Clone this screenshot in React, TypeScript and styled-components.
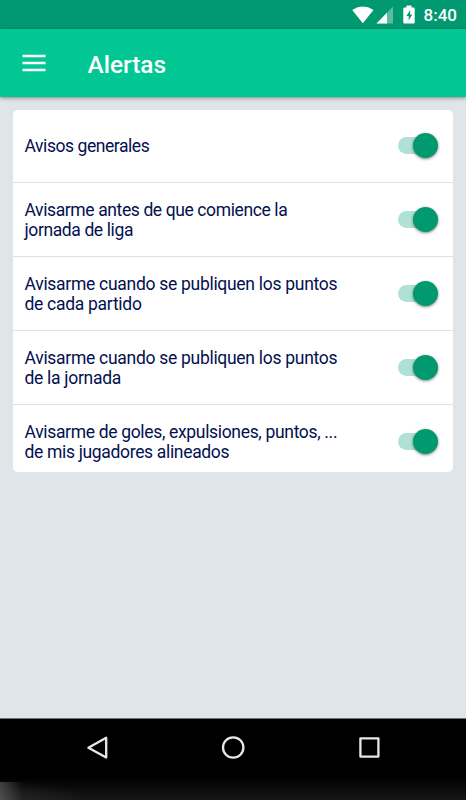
import React from "react";
import styled, { createGlobalStyle } from "styled-components";

const GlobalStyle = createGlobalStyle`
  *, *::before, *::after { box-sizing: border-box; }
  html, body { margin: 0; padding: 0; background: #e0e5e9; }
  body { font-family: Roboto, sans-serif; }
`;

const Screen = styled.div`
  display: flex;
  flex-direction: column;
  width: 100%;
  max-width: 466px;
  height: 800px;
  background: #e0e5e9;
  overflow: hidden;
`;

const StatusBar = styled.header`
  display: flex;
  align-items: center;
  justify-content: flex-end;
  flex: none;
  height: 29px;
  padding: 1px 9px 0 0;
  background: #019972;
  color: #fff;
`;

const StatusIcons = styled.svg`
  display: block;
  width: 66px;
  height: 22px;
  margin-right: 6px;
`;

const Clock = styled.time`
  font-size: 17px;
  font-weight: 500;
  line-height: 20px;
`;

const AppBar = styled.div`
  display: flex;
  align-items: center;
  flex: none;
  height: 68px;
  padding: 0 22px;
  background: #02c794;
  box-shadow: 0 1px 4px rgba(0, 0, 0, 0.42);
  z-index: 1;
`;

const MenuButton = styled.svg`
  width: 24px;
  height: 20px;
  margin: 0 41.5px 1px 0;
  stroke: #fff;
  stroke-width: 2.5;
`;

const Title = styled.h1`
  margin: 3px 0 0;
  color: #fff;
  font-size: 24.4px;
  font-weight: 500;
  line-height: 30px;
`;

const Content = styled.main`
  flex: 1;
  min-height: 0;
  padding: 13px;
`;

const Card = styled.ul`
  height: 362px;
  margin: 0;
  padding: 0;
  list-style: none;
  background: #fff;
  border-radius: 5px;
  overflow: hidden;
`;

const Row = styled.li`
  display: flex;
  align-items: center;
  justify-content: space-between;
  height: 74px;
  padding: 0 15px 0 11.5px;
  border-bottom: 1px solid #dce3e8;

  &:first-child { height: 73px; }
  &:last-child { border-bottom: 0; }
`;

const Label = styled.span<{ $tracking: number }>`
  color: #03104f;
  font-size: 17.5px;
  letter-spacing: ${(p) => p.$tracking}px;
  line-height: 20px;
  white-space: pre-line;
`;

const Toggle = styled.button<{ $on: boolean }>`
  display: flex;
  align-items: center;
  justify-content: ${(p) => (p.$on ? "flex-end" : "flex-start")};
  width: 34px;
  height: 17px;
  margin: 0 6px 1px 0;
  padding: 0;
  border: 0;
  border-radius: 9px;
  background: ${(p) => (p.$on ? "#b0e1d5" : "#bdc3c7")};
`;

const Thumb = styled.span`
  flex: none;
  width: 25px;
  height: 25px;
  margin-right: -6px;
  border-radius: 50%;
  background: #019970;
  box-shadow: 0 1px 3px rgba(0, 0, 0, 0.5);
`;

const NavBar = styled.nav`
  display: flex;
  justify-content: center;
  gap: 112px;
  flex: none;
  height: 82px;
  padding-top: 17px;
  border-top: 1px solid #737678;
  background:
    linear-gradient(90deg, rgba(110, 110, 110, 0.55), transparent 22px) 0 100% / 24px 18px no-repeat,
    radial-gradient(ellipse 90px 20px at 0 100%, rgba(60, 60, 60, 0.5) 0%, transparent 100%),
    linear-gradient(#000 0 58px, #060606 64px, #181616 82px);
`;

const NavIcon = styled.svg`
  width: 24px;
  height: 24px;
  fill: none;
  stroke: #e8e8e8;
  stroke-width: 2.3;
  stroke-linejoin: round;
`;

const alerts = [
  { text: "Avisos generales", tracking: -0.44 },
  { text: "Avisarme antes de que comience la\njornada de liga", tracking: -0.39 },
  { text: "Avisarme cuando se publiquen los puntos\nde cada partido", tracking: -0.29 },
  { text: "Avisarme cuando se publiquen los puntos\nde la jornada", tracking: -0.29 },
  { text: "Avisarme de goles, expulsiones, puntos, ...\nde mis jugadores alineados", tracking: -0.33 },
];

export default function App() {
  const [enabled, setEnabled] = React.useState(alerts.map(() => true));
  const toggle = (index: number) =>
    setEnabled((values) => values.map((value, i) => (i === index ? !value : value)));

  return (
    <>
      <GlobalStyle />
      <Screen>
        <StatusBar>
          <StatusIcons viewBox="0 0 66 22" fill="#fff">
            <path d="M0.2 5.9Q10.8-0.8 21.5 5.9L10.8 19.3Z" />
            <path d="M41 2.5V19.5H24.5Z" fillOpacity="0.35" />
            <path d="M35 8.7V19.5H24.5Z" />
            <path
              fillRule="evenodd"
              d="M54.5 1.5h5v2h2.2q1 0 1 1v13.9q0 1-1 1h-9.4q-1 0-1-1V4.5q0-1 1-1h2.2ZM58.3 6l-3.9 6h2.3v4.6l3.5-6h-2.2Z"
            />
          </StatusIcons>
          <Clock>8:40</Clock>
        </StatusBar>
        <AppBar>
          <MenuButton viewBox="0 0 24 20" role="img" aria-label="Menú">
            <path d="M0.5 3.1H23.5M0.5 10.1H23.5M0.5 16.9H23.5" />
          </MenuButton>
          <Title>Alertas</Title>
        </AppBar>
        <Content>
          <Card>
            {alerts.map(({ text, tracking }, index) => (
              <Row key={text}>
                <Label $tracking={tracking}>{text}</Label>
                <Toggle
                  role="switch"
                  aria-checked={enabled[index]}
                  aria-label={text}
                  $on={enabled[index]}
                  onClick={() => toggle(index)}
                >
                  <Thumb />
                </Toggle>
              </Row>
            ))}
          </Card>
        </Content>
        <NavBar>
          <NavIcon viewBox="0 0 24 24">
            <path d="M3.4 11.7L21.2 1.7V21.5Z" />
          </NavIcon>
          <NavIcon viewBox="0 0 24 24">
            <circle cx="12.2" cy="11.5" r="10.2" />
          </NavIcon>
          <NavIcon viewBox="0 0 24 24">
            <rect x="3.4" y="2.3" width="18" height="18.3" />
          </NavIcon>
        </NavBar>
      </Screen>
    </>
  );
}
